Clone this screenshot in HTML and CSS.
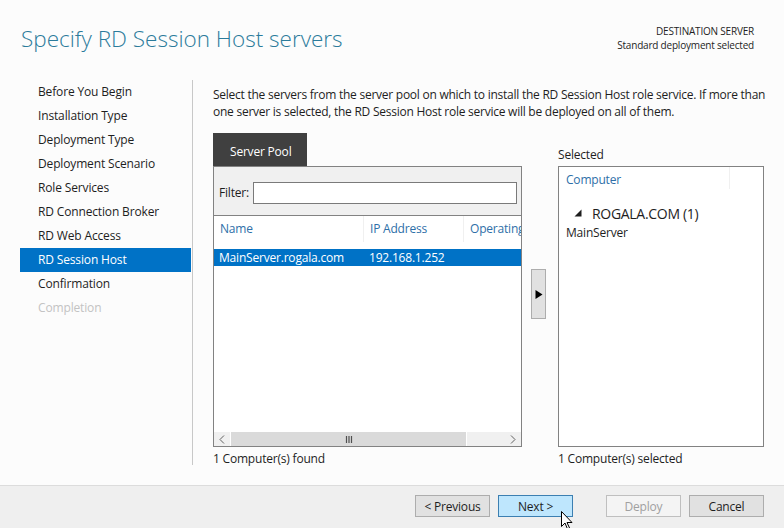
FILE: index.html
```html
<!DOCTYPE html>
<html>
<head>
<meta charset="utf-8">
<link rel="stylesheet" href="styles.css">
</head>
<body>
<div class="page">
  <div class="content">
    <header class="head">
      <h1 class="title">Specify RD Session Host servers</h1>
      <div class="dest">
        <div>DESTINATION SERVER</div>
        <div>Standard deployment selected</div>
      </div>
    </header>
    <div class="body">
      <nav class="nav">
        <div class="nav-item">Before You Begin</div>
        <div class="nav-item">Installation Type</div>
        <div class="nav-item">Deployment Type</div>
        <div class="nav-item">Deployment Scenario</div>
        <div class="nav-item">Role Services</div>
        <div class="nav-item">RD Connection Broker</div>
        <div class="nav-item">RD Web Access</div>
        <div class="nav-item active">RD Session Host</div>
        <div class="nav-item">Confirmation</div>
        <div class="nav-item disabled">Completion</div>
      </nav>
      <main class="main">
        <p class="desc">Select the servers from the server pool on which to install the RD Session Host role service. If more than one server is selected, the RD Session Host role service will be deployed on all of them.</p>
        <div class="pick">
          <div class="pool">
            <div class="tab">Server Pool</div>
            <div class="box poolbox">
              <div class="filter">
                <span class="flabel">Filter:</span>
                <div class="finput"></div>
              </div>
              <div class="cols">
                <div class="col c1">Name</div>
                <div class="col c2">IP Address</div>
                <div class="col c3">Operating</div>
              </div>
              <div class="row sel">
                <div class="cell c1">MainServer.rogala.com</div>
                <div class="cell c2">192.168.1.252</div>
                <div class="cell c3"></div>
              </div>
              <div class="spacer"></div>
              <div class="hscroll">
                <div class="sbtn">
                  <svg width="6" height="9" viewBox="0 0 6 9"><path d="M5 0.5 L1 4.5 L5 8.5" fill="none" stroke="#606060" stroke-width="1"/></svg>
                </div>
                <div class="thumb">
                  <svg width="8" height="7" viewBox="0 0 8 7"><path d="M1.5 0 V7 M4 0 V7 M6.5 0 V7" stroke="#505050" stroke-width="1.2"/></svg>
                </div>
                <div class="track"></div>
                <div class="sbtn">
                  <svg width="6" height="9" viewBox="0 0 6 9"><path d="M1 0.5 L5 4.5 L1 8.5" fill="none" stroke="#606060" stroke-width="1"/></svg>
                </div>
              </div>
            </div>
            <div class="foot">1 Computer(s) found</div>
          </div>
          <div class="mid">
            <div class="addbtn">
              <svg width="8" height="9" viewBox="0 0 8 9"><path d="M0.5 0 L7.5 4.5 L0.5 9 Z" fill="#000"/></svg>
            </div>
          </div>
          <div class="selected">
            <div class="sellabel">Selected</div>
            <div class="box selbox">
              <div class="selhead"><div class="selcol">Computer</div><div class="selrest"></div></div>
              <div class="group">
                <svg class="gtri" width="8" height="8" viewBox="0 0 8 8"><path d="M7.5 0.5 V7.5 H0.5 Z" fill="#1e1e1e"/></svg>
                <span>ROGALA.COM (1)</span>
              </div>
              <div class="selitem">MainServer</div>
            </div>
            <div class="foot">1 Computer(s) selected</div>
          </div>
        </div>
      </main>
    </div>
  </div>
  <footer class="footer">
    <button class="btn">&lt; Previous</button>
    <button class="btn primary">Next &gt;</button>
    <button class="btn disabled deploy">Deploy</button>
    <button class="btn">Cancel</button>
    <svg class="cursor" width="12" height="19" viewBox="0 0 12 19"><path d="M0.5 0.5 V15.5 L4 12 L6.5 18 L8.5 17 L6 11.5 H11 Z" fill="#fff" stroke="#000" stroke-width="1"/></svg>
  </footer>
</div>
</body>
</html>
```

FILE: styles.css
```css
* { box-sizing: border-box; }
html, body { margin: 0; padding: 0; }
body {
  width: 784px;
  height: 528px;
  overflow: hidden;
  background: #fcfcfc;
  font-family: "Open Sans", "Noto Sans", sans-serif;
  font-size: 12px;
  color: #1e1e1e;
}
.page {
  height: 528px;
  display: flex;
  flex-direction: column;
}
.content {
  flex: 1;
  display: flex;
  flex-direction: column;
}
.head {
  display: flex;
  justify-content: space-between;
  align-items: flex-start;
  height: 80px;
  padding: 0 30px 0 21px;
}
.title {
  margin: 24px 0 0 0;
  font-size: 22.5px;
  font-weight: 300;
  color: #2b7b9b;
  letter-spacing: 0;
  line-height: 30px;
}
.dest {
  margin-top: 24px;
  text-align: right;
  font-size: 10px;
  line-height: 14px;
  color: #1e1e1e;
  letter-spacing: -0.2px;
}
.body {
  display: flex;
  height: 385px;
}
.nav {
  width: 173px;
  margin-left: 20px;
  border-right: 1px solid #c8c8c8;
  height: 385px;
  padding-right: 1px;
}
.nav-item {
  height: 24px;
  line-height: 24px;
  padding-left: 18px;
  letter-spacing: -0.15px;
  color: #1e1e1e;
}
.nav-item.active {
  background: #0072c6;
  color: #fff;
}
.nav-item.disabled { color: #c3c3c3; }
.main {
  flex: 1;
  padding-left: 20px;
}
.desc {
  margin: 6px 0 0 0;
  width: 560px;
  line-height: 17px;
  letter-spacing: -0.25px;
}
.pick {
  display: flex;
  margin-top: 13px;
}
.pool {
  width: 309px;
  display: flex;
  flex-direction: column;
}
.tab {
  width: 94px;
  height: 33px;
  background: #404040;
  color: #fff;
  padding-left: 17px;
  line-height: 38px;
  letter-spacing: -0.2px;
}
.box {
  border: 1px solid #828282;
  background: #fff;
  height: 281px;
}
.poolbox {
  display: flex;
  flex-direction: column;
}
.filter {
  height: 49px;
  background: #f0f0f0;
  border-bottom: 1px solid #828282;
  display: flex;
  align-items: flex-start;
  padding: 15px 4px 0 5px;
}
.flabel { width: 34px; letter-spacing: -0.2px; line-height: 22px; }
.finput {
  flex: 1;
  height: 22px;
  border: 1px solid #7a7a7a;
  background: #fff;
}
.cols {
  display: flex;
  height: 26px;
  align-items: center;
  overflow: hidden;
}
.col {
  color: #2e6fa8;
  height: 26px;
  line-height: 26px;
  padding-left: 6px;
  border-right: 1px solid #f0f0f0;
  white-space: nowrap;
  letter-spacing: -0.2px;
}
.c1 { width: 150px; flex: none; }
.c2 { width: 100px; flex: none; }
.c3 { flex: 1; overflow: hidden; border-right: none; }
.row {
  display: flex;
  height: 17px;
  line-height: 17px;
  margin-top: 7px;
}
.row .cell {
  padding-left: 5px;
  white-space: nowrap;
  letter-spacing: -0.2px;
}
.row.sel { background: #0072c6; color: #fff; }
.spacer { flex: 1; }
.hscroll {
  height: 15px;
  display: flex;
  border-top: 1px solid #fff;
}
.sbtn {
  width: 16px;
  height: 14px;
  display: flex;
  align-items: center;
  justify-content: center;
  background: #f0f0f0;
}
.thumb {
  width: 235px;
  background: #dadada;
  display: flex;
  align-items: center;
  justify-content: center;
  margin: 0 1px;
}
.track { flex: 1; background: #f0f0f0; }
.foot {
  margin-top: 3px;
  letter-spacing: -0.2px;
}
.mid {
  width: 36px;
  display: flex;
  justify-content: center;
  padding-top: 136px;
}
.addbtn {
  width: 15px;
  height: 50px;
  background: #e1e1e1;
  border: 1px solid #adadad;
  display: flex;
  align-items: center;
  justify-content: center;
  margin-left: -3px;
}
.selected {
  width: 206px;
  display: flex;
  flex-direction: column;
}
.sellabel {
  height: 33px;
  line-height: 44px;
  letter-spacing: -0.2px;
}
.selhead {
  display: flex;
  height: 22px;
}
.selcol {
  width: 171px;
  padding-left: 7px;
  line-height: 26px;
  color: #2e6fa8;
  border-right: 1px solid #f0f0f0;
  letter-spacing: -0.2px;
}
.selrest { flex: 1; }
.group {
  display: flex;
  align-items: center;
  margin-top: 14px;
  padding-left: 15px;
  font-size: 14px;
  height: 20px;
  letter-spacing: -0.3px;
}
.gtri { margin-right: 10px; }
.selitem {
  padding-left: 7px;
  line-height: 16px;
  margin-top: 2px;
  letter-spacing: -0.2px;
}
.footer {
  height: 43px;
  background: #efefef;
  border-top: 1px solid #dcdcdc;
  display: flex;
  align-items: center;
  justify-content: flex-end;
  padding: 0 20px 2px 0;
  position: relative;
}
.btn {
  width: 75px;
  height: 22px;
  margin-left: 8px;
  background: #e1e1e1;
  border: 1px solid #adadad;
  font-family: inherit;
  font-size: 12px;
  color: #1e1e1e;
  padding: 0;
  letter-spacing: -0.2px;
}
.btn.primary {
  background: #bee6fd;
  border-color: #3c7fb1;
}
.btn.disabled {
  background: #f4f4f4;
  border-color: #bfbfbf;
  color: #a0a0a0;
}
.btn.deploy { margin-left: 33px; }
.cursor {
  position: absolute;
  left: 561px;
  top: 25px;
}
```
